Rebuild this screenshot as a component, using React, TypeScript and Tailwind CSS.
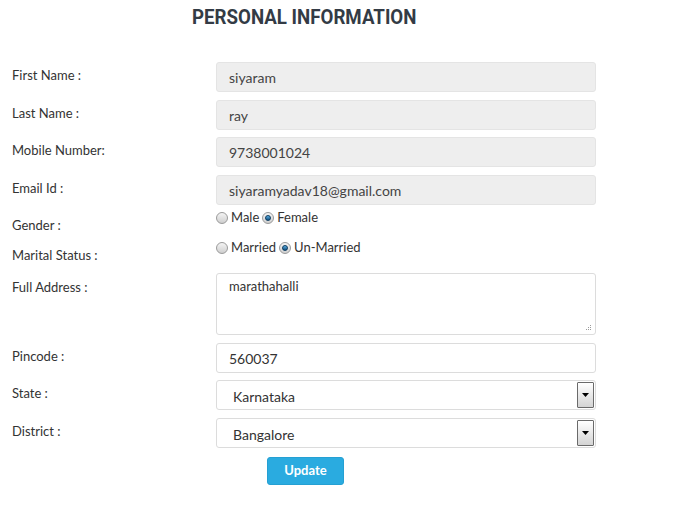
import React from "react";

const Label = ({ children, pt = "pt-[5px]" }: { children: React.ReactNode; pt?: string }) => (
  <div className={`w-[204px] shrink-0 text-[13px] leading-[16px] text-[#333] ${pt}`}>{children}</div>
);

const Radio = ({ checked }: { checked?: boolean }) => (
  <span className="inline-flex w-[12px] h-[12px] rounded-full border border-[#9a9a9a] bg-gradient-to-b from-[#f4f4f4] to-[#cfcfcf] items-center justify-center mr-[3px]">
    {checked && <span className="w-[6px] h-[6px] rounded-full bg-gradient-to-b from-[#5ab0e6] to-[#12507d] border border-[#0b3b60]" />}
  </span>
);

const Arrow = () => (
  <div className="w-[17px] h-[26px] border border-[#6a6a6a] rounded-[1px] bg-gradient-to-b from-[#ffffff] to-[#d4d4d4] flex items-center justify-center">
    <svg width="7" height="4" viewBox="0 0 7 4">
      <path d="M0 0h7L3.5 4z" fill="#000" />
    </svg>
  </div>
);

const Field = ({ value, readOnly }: { value: string; readOnly?: boolean }) => (
  <div
    className={`w-[380px] h-[30px] rounded-[3px] border flex items-center pl-[12px] pt-[1px] text-[14px] ${
      readOnly ? "bg-[#eeeeee] border-[#e4e4e4] text-[#444]" : "bg-white border-[#dcdcdc] text-[#333]"
    }`}
  >
    {value}
  </div>
);

const Select = ({ value }: { value: string }) => (
  <div className="w-[380px] h-[30px] rounded-[3px] border border-[#dcdcdc] bg-white flex items-center justify-between pl-[16px] pr-[1px] text-[14px] text-[#333]">
    <span className="pt-[2px]">{value}</span>
    <Arrow />
  </div>
);

export default function App() {
  return (
    <div className="w-[677px] h-[529px] bg-white font-['Lato',sans-serif]">
      <h1 className="pl-[192px] pt-[5px] h-[62px] font-['Roboto',sans-serif] font-bold text-[21px] leading-[24px] text-[#333b45]">
        <span className="inline-block origin-left scale-x-[0.89] whitespace-nowrap">PERSONAL INFORMATION</span>
      </h1>

      <div className="px-[12px] flex flex-col">
        <div className="flex h-[30px]">
          <Label>First Name :</Label>
          <Field value="siyaram" readOnly />
        </div>
        <div className="flex h-[30px] mt-[8px]">
          <Label>Last Name :</Label>
          <Field value="ray" readOnly />
        </div>
        <div className="flex h-[30px] mt-[7px]">
          <Label>Mobile Number:</Label>
          <Field value="9738001024" readOnly />
        </div>
        <div className="flex h-[30px] mt-[8px]">
          <Label>Email Id :</Label>
          <Field value="siyaramyadav18@gmail.com" readOnly />
        </div>

        <div className="flex h-[30px] mt-[0px]">
          <Label pt="pt-[12px]">Gender :</Label>
          <div className="flex items-center h-[25px] text-[13px] text-[#333]">
            <Radio /> <span className="mr-[3px]">Male</span>
            <Radio checked /> <span>Female</span>
          </div>
        </div>
        <div className="flex h-[38px]">
          <Label pt="pt-[12px]">Marital Status :</Label>
          <div className="flex items-center h-[25px] text-[13px] text-[#333]">
            <Radio /> <span className="mr-[3px]">Married</span>
            <Radio checked /> <span>Un-Married</span>
          </div>
        </div>

        <div className="flex">
          <Label pt="pt-[6px]">Full Address :</Label>
          <div className="relative w-[380px] h-[62px] rounded-[3px] border border-[#dcdcdc] bg-white pl-[12px] pt-[3px] text-[13px] text-[#333]">
            marathahalli
            <svg className="absolute right-[3px] bottom-[3px]" width="7" height="7" viewBox="0 0 7 7">
              <rect x="5" y="1" width="1" height="1" fill="#9a9a9a" />
              <rect x="3" y="3" width="1" height="1" fill="#9a9a9a" />
              <rect x="5" y="3" width="1" height="1" fill="#9a9a9a" />
              <rect x="1" y="5" width="1" height="1" fill="#9a9a9a" />
              <rect x="3" y="5" width="1" height="1" fill="#9a9a9a" />
              <rect x="5" y="5" width="1" height="1" fill="#9a9a9a" />
            </svg>
          </div>
        </div>

        <div className="flex h-[30px] mt-[8px]">
          <Label>Pincode :</Label>
          <Field value="560037" />
        </div>
        <div className="flex h-[30px] mt-[7px]">
          <Label>State :</Label>
          <Select value="Karnataka" />
        </div>
        <div className="flex h-[30px] mt-[8px]">
          <Label>District :</Label>
          <Select value="Bangalore" />
        </div>

        <div className="pl-[255px] mt-[9px]">
          <button className="w-[77px] h-[28px] rounded-[3px] bg-[#2aabe0] border border-[#25a0d3] text-white text-[13px] font-bold">
            Update
          </button>
        </div>
      </div>
    </div>
  );
}
